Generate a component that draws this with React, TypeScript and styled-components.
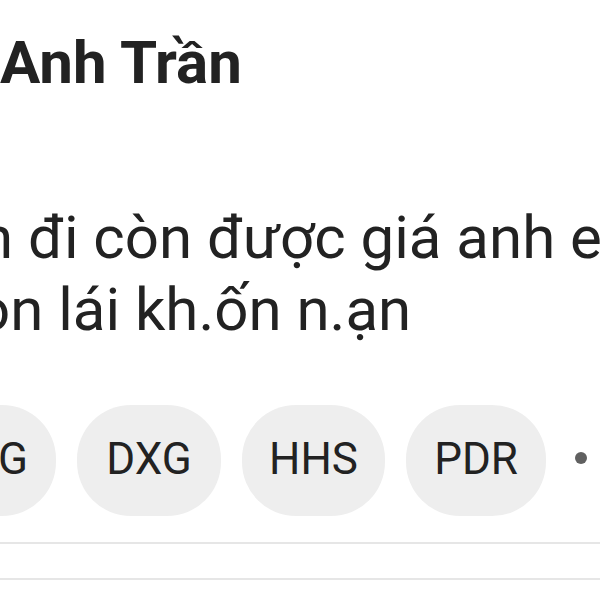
import React from "react";
import styled, { createGlobalStyle } from "styled-components";

const Global = createGlobalStyle`
  html, body { margin: 0; padding: 0; background: #ffffff; }
  body { font-family: Roboto, "Noto Sans", "Liberation Sans", sans-serif; color: #222222; }
`;

const Page = styled.div`
  width: 600px;
  height: 600px;
  overflow: hidden;
  background: #ffffff;
  display: flex;
  flex-direction: column;
`;

const Name = styled.div`
  margin-top: 29px;
  font-size: 60px;
  font-weight: 700;
  line-height: 68px;
  color: #222222;
  white-space: nowrap;
`;

const Body = styled.div`
  margin-top: 105px;
  display: flex;
  flex-direction: column;
`;

const Line = styled.div<{ $shift: number }>`
  font-size: 60px;
  line-height: 72px;
  font-weight: 400;
  color: #222222;
  white-space: nowrap;
  margin-left: ${(p) => -p.$shift}px;
`;

const ChipRow = styled.div`
  margin-top: 59px;
  margin-left: -71px;
  display: flex;
  align-items: center;
  gap: 21px;
`;

const Chip = styled.div<{ $w: number }>`
  flex: none;
  width: ${(p) => p.$w}px;
  height: 111px;
  border-radius: 54px;
  background: #eeeeee;
  display: flex;
  align-items: center;
  justify-content: center;
  font-size: 44px;
  font-weight: 400;
  color: #222222;
  padding-bottom: 3px;
  box-sizing: border-box;
`;

const Dot = styled.div`
  flex: none;
  width: 12px;
  height: 12px;
  border-radius: 50%;
  background: #606060;
  margin-left: 8px;
  margin-bottom: 5px;
`;

const Divider = styled.div<{ $top: number }>`
  height: 2px;
  background: #e6e6e6;
  margin-top: ${(p) => p.$top}px;
`;

export default function App() {
  return (
    <>
      <Global />
      <Page>
        <Name>Anh Trần</Name>
        <Body>
          <Line $shift={20}>n đi còn được giá anh em</Line>
          <Line $shift={24}>on lái kh.ốn n.ạn</Line>
        </Body>
        <ChipRow>
          <Chip $w={127}>DIG</Chip>
          <Chip $w={144}>DXG</Chip>
          <Chip $w={143}>HHS</Chip>
          <Chip $w={140}>PDR</Chip>
          <Dot />
        </ChipRow>
        <Divider $top={26} />
        <Divider $top={34} />
      </Page>
    </>
  );
}
